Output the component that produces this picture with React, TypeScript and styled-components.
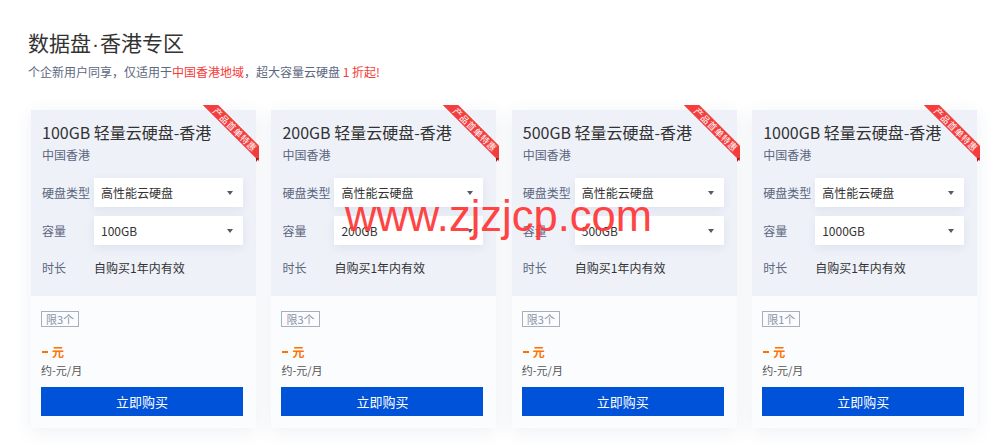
import styled, { createGlobalStyle } from "styled-components";

const GlobalStyle = createGlobalStyle`
  html, body {
    margin: 0;
    padding: 0;
    background: #ffffff;
    font-family: "Noto Sans CJK SC", "Noto Sans", "Liberation Sans", sans-serif;
  }
`;

const products = [
  { size: "100GB", limit: 3 },
  { size: "200GB", limit: 3 },
  { size: "500GB", limit: 3 },
  { size: "1000GB", limit: 1 },
];

const Page = styled.div`
  position: relative;
  width: 1000px;
  height: 445px;
  padding: 27px 0 0 28px;
  box-sizing: border-box;
  overflow: hidden;
`;

const Title = styled.h1`
  margin: 0;
  height: 30px;
  font-size: 21px;
  line-height: 30px;
  font-weight: 400;
  color: #333333;
`;

const Dot = styled.span`
  font-family: "Liberation Sans", sans-serif;
  line-height: 1;
  margin: 0 1px;
`;

const Subtitle = styled.p`
  margin: 6px 0 0;
  font-size: 12px;
  line-height: 18px;
  color: #5c6780;
`;

const Hot = styled.span`
  color: #f63a3a;
`;

const Cards = styled.div`
  display: grid;
  grid-template-columns: repeat(4, 225px);
  column-gap: 15.4px;
  margin: 29px 0 0 3px;
`;

const Card = styled.div`
  position: relative;
  height: 318px;
  display: flex;
  flex-direction: column;
  box-shadow: 0 4px 18px rgba(40, 60, 110, 0.08);
  background: #fbfcfe;
`;

const Top = styled.div`
  height: 186px;
  box-sizing: border-box;
  padding: 10px 13px 0 11px;
  background: #eef1f8;
`;

const CardTitle = styled.div`
  font-size: 16px;
  line-height: 24px;
  color: #333333;
`;

const Region = styled.div`
  margin-top: 2px;
  font-size: 12px;
  line-height: 18px;
  color: #5c6780;
`;

const Rows = styled.div`
  margin-top: 14px;
  display: flex;
  flex-direction: column;
  gap: 9px;
`;

const Row = styled.div<{ $extra?: number }>`
  display: flex;
  align-items: center;
  margin-top: ${(p) => p.$extra ?? 0}px;
`;

const Label = styled.div`
  width: 52px;
  flex: none;
  font-size: 12px;
  line-height: 18px;
  color: #5c6780;
`;

const Select = styled.div`
  flex: 1;
  height: 29px;
  display: flex;
  align-items: center;
  justify-content: space-between;
  padding: 0 10px 0 7px;
  background: #ffffff;
  box-shadow: 0 3px 10px rgba(40, 60, 110, 0.08);
  font-size: 12px;
  color: #333333;
`;

const Caret = styled.span`
  width: 0;
  height: 0;
  border-left: 3px solid transparent;
  border-right: 3px solid transparent;
  border-top: 4px solid #555b66;
`;

const Value = styled.div`
  font-size: 12px;
  line-height: 18px;
  color: #333333;
`;

const Bottom = styled.div`
  flex: 1;
  padding: 15px 13px 12px 10px;
  display: flex;
  flex-direction: column;
  align-items: flex-start;
`;

const Tag = styled.span`
  height: 16px;
  box-sizing: border-box;
  padding: 0 4px;
  border: 1px solid #a7afbf;
  font-size: 11px;
  line-height: 14px;
  color: #8a93a6;
`;

const Price = styled.div`
  margin-top: 16px;
  font-size: 12px;
  line-height: 18px;
  font-weight: 700;
  color: #ff7200;
`;

const Dash = styled.span`
  display: inline-block;
  width: 6px;
  height: 2px;
  margin: 0 4px 3px 1px;
  vertical-align: middle;
  background: #ff7200;
`;

const Monthly = styled.div`
  font-size: 11px;
  line-height: 18px;
  color: #555555;
`;

const Buy = styled.button`
  margin-top: 8px;
  width: 100%;
  height: 29px;
  border: 0;
  background: #0052d9;
  color: #ffffff;
  font-family: inherit;
  font-size: 13px;
  cursor: pointer;
`;

const Ribbon = styled.div`
  position: absolute;
  top: -5px;
  right: -3px;
  width: 58px;
  height: 58px;
  overflow: hidden;
`;

const Band = styled.div`
  position: absolute;
  left: -11px;
  top: 19px;
  width: 90px;
  height: 11px;
  transform: rotate(45deg);
  background: #f43d3d;
  color: #ffffff;
  font-size: 9px;
  line-height: 11px;
  text-align: center;
  letter-spacing: 0.5px;
`;

const Fold = styled.div`
  position: absolute;
  right: -3px;
  top: 48px;
  width: 0;
  height: 0;
  border-left: 3px solid #a31b1b;
  border-bottom: 4px solid transparent;
`;

const Watermark = styled.div`
  position: absolute;
  left: 345px;
  top: 191px;
  font-family: "Liberation Sans", Arial, sans-serif;
  font-size: 43.5px;
  line-height: 50px;
  color: #ff3b3b;
  opacity: 0.95;
  pointer-events: none;
`;

export default function App() {
  return (
    <>
      <GlobalStyle />
      <Page>
        <Title>
          数据盘<Dot>·</Dot>香港专区
        </Title>
        <Subtitle>
          个企新用户同享，仅适用于<Hot>中国香港地域</Hot>，超大容量云硬盘 <Hot>1 折起!</Hot>
        </Subtitle>
        <Cards>
          {products.map((p) => (
            <Card key={p.size}>
              <Top>
                <CardTitle>{p.size} 轻量云硬盘-香港</CardTitle>
                <Region>中国香港</Region>
                <Rows>
                  <Row>
                    <Label>硬盘类型</Label>
                    <Select>
                      高性能云硬盘
                      <Caret />
                    </Select>
                  </Row>
                  <Row>
                    <Label>容量</Label>
                    <Select>
                      {p.size}
                      <Caret />
                    </Select>
                  </Row>
                  <Row $extra={5}>
                    <Label>时长</Label>
                    <Value>自购买1年内有效</Value>
                  </Row>
                </Rows>
              </Top>
              <Bottom>
                <Tag>限{p.limit}个</Tag>
                <Price>
                  <Dash />元
                </Price>
                <Monthly>约-元/月</Monthly>
                <Buy>立即购买</Buy>
              </Bottom>
              <Ribbon>
                <Band>产品首单特惠</Band>
              </Ribbon>
              <Fold />
            </Card>
          ))}
        </Cards>
        <Watermark>www.zjzjcp.com</Watermark>
      </Page>
    </>
  );
}
